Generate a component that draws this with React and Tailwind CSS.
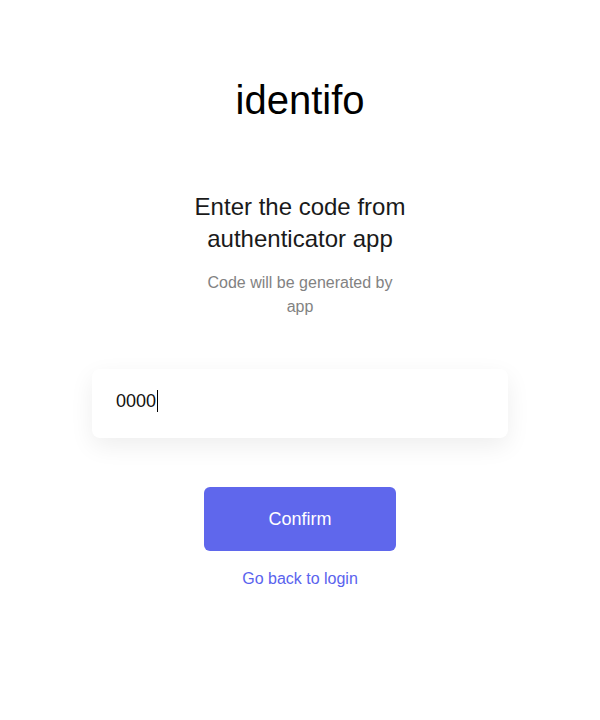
import React from 'react';

const App = () => {
    return (
        <div className="min-h-[720px] w-full bg-white flex flex-col items-center font-['Liberation_Sans',Arial,sans-serif]">
            {/* Logo */}
            <h1 className="mt-[76px] text-[40px] leading-[48px] text-black">identifo</h1>

            {/* Heading */}
            <div className="mt-[67px] w-[216px] flex flex-col items-center text-center">
                <h2 className="text-[24px] leading-[32px] text-[#1a1a1a]">Enter the code from authenticator app</h2>
                <p className="mt-[16px] text-[16px] leading-[24px] text-[#828282]">Code will be generated by app</p>
            </div>

            {/* Code input */}
            <div className="mt-[50px] w-[416px] h-[69px] rounded-lg bg-white shadow-[0_8px_24px_rgba(0,0,0,0.07)] flex items-center px-6 pb-[5px]">
                <span className="text-[18px] text-[#111] leading-none">0000</span>
                <span className="ml-px w-px h-[22px] bg-black" />
            </div>

            {/* Actions */}
            <button className="mt-[49px] w-[192px] h-[64px] rounded-md bg-[#5f67ec] text-white text-[18px]">
                Confirm
            </button>
            <a className="mt-[18px] text-[16px] leading-[20px] text-[#5a63ee] cursor-pointer">Go back to login</a>
        </div>
    );
};

export default App;
